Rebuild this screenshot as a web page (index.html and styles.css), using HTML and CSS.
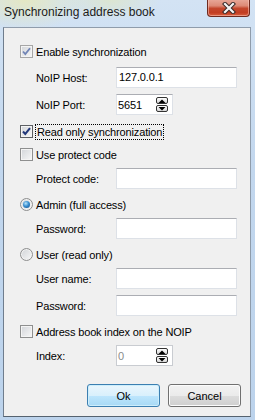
FILE: index.html
```html
<!DOCTYPE html>
<html lang="en">
<head>
    <meta charset="UTF-8">
    <title>Synchronizing address book</title>
    <link rel="stylesheet" href="styles.css">
</head>
<body>
    <div class="titlebar">
        <div class="title">Synchronizing address book</div>
        <div class="close">
            <svg width="14" height="12" viewBox="0 0 14 12">
                <path d="M3 2 L11 10 M11 2 L3 10" stroke="#3a2a28" stroke-width="4.2" stroke-linecap="square"/>
                <path d="M3 2 L11 10 M11 2 L3 10" stroke="#f4f4f4" stroke-width="2.2" stroke-linecap="square"/>
            </svg>
        </div>
    </div>

    <div class="client">
        <div class="row check-row m17">
            <span class="box soft"><svg width="11" height="11" viewBox="0 0 11 11"><path d="M2 5.5 L4.3 8 L9 2.2" class="tick"/></svg></span>
            <span>Enable synchronization</span>
        </div>
        <div class="row field-row m9">
            <span class="label">NoIP Host:</span>
            <div class="text">127.0.0.1</div>
        </div>
        <div class="row field-row m6">
            <span class="label">NoIP Port:</span>
            <div class="spin">
                <span class="value">5651</span>
                <div class="arrows">
                    <span class="arrow"><svg width="8" height="4" viewBox="0 0 8 4"><path d="M0.5 4 L4 0.5 L7.5 4 Z" fill="#000"/></svg></span>
                    <span class="arrow"><svg width="8" height="4" viewBox="0 0 8 4"><path d="M0.5 0 L4 3.5 L7.5 0 Z" fill="#000"/></svg></span>
                </div>
            </div>
        </div>
        <div class="row check-row m10">
            <span class="box dark"><svg width="11" height="11" viewBox="0 0 11 11"><path d="M2 5.5 L4.3 8 L9 2.2" class="tick"/></svg></span>
            <span class="focus">Read only synchronization</span>
        </div>
        <div class="row check-row m10">
            <span class="box"></span>
            <span>Use protect code</span>
        </div>
        <div class="row field-row m7">
            <span class="label">Protect code:</span>
            <div class="text"></div>
        </div>
        <div class="row check-row m9">
            <span class="radio on"><span class="dot"></span></span>
            <span>Admin (full access)</span>
        </div>
        <div class="row field-row m7">
            <span class="label">Password:</span>
            <div class="text"></div>
        </div>
        <div class="row check-row m9">
            <span class="radio"></span>
            <span>User (read only)</span>
        </div>
        <div class="row field-row m7">
            <span class="label">User name:</span>
            <div class="text"></div>
        </div>
        <div class="row field-row m6">
            <span class="label">Password:</span>
            <div class="text"></div>
        </div>
        <div class="row check-row m9">
            <span class="box"></span>
            <span>Address book index on the NOIP</span>
        </div>
        <div class="row field-row m7">
            <span class="label">Index:</span>
            <div class="spin disabled">
                <span class="value">0</span>
                <div class="arrows">
                    <span class="arrow"><svg width="8" height="4" viewBox="0 0 8 4"><path d="M0.5 4 L4 0.5 L7.5 4 Z" fill="#000"/></svg></span>
                    <span class="arrow"><svg width="8" height="4" viewBox="0 0 8 4"><path d="M0.5 0 L4 3.5 L7.5 0 Z" fill="#000"/></svg></span>
                </div>
            </div>
        </div>
        <div class="buttons">
            <button class="btn default">Ok</button>
            <button class="btn">Cancel</button>
        </div>
    </div>
</body>
</html>
```

FILE: styles.css
```css
/* Window frame */
body {
  margin: 0;
  width: 255px;
  height: 420px;
  overflow: hidden;
  display: flex;
  flex-direction: column;
  font-family: "Liberation Sans", Arial, sans-serif;
  font-size: 11px;
  color: #000;
  background:
    radial-gradient(ellipse 60px 30px at 25px 0px, rgba(230, 232, 190, 0.9), rgba(230, 232, 190, 0)),
    radial-gradient(ellipse 50px 20px at 110px 0px, rgba(222, 230, 200, 0.8), rgba(222, 230, 200, 0)),
    linear-gradient(#d3e3f4, #c2d7ee 40%, #bcd3ec);
}

.titlebar {
  height: 27px;
  display: flex;
  flex-shrink: 0;
}

.title {
  flex: 1;
  padding: 5px 0 0 4px;
  font-size: 12px;
  line-height: 15px;
  color: #1b1b1b;
}

/* Red close button */
.close {
  width: 43px;
  height: 18px;
  margin: -1px 5px 0 0;
  box-sizing: border-box;
  border: 1px solid #6e2a1f;
  border-top: 0;
  border-radius: 0 0 4px 4px;
  background: linear-gradient(#e9aa9a 0%, #dd8a76 40%, #c4472c 55%, #c23d22 80%, #d9603e 100%);
  box-shadow: inset 0 0 0 1px rgba(255, 210, 200, 0.5);
  display: flex;
  align-items: center;
  justify-content: center;
}

/* Dialog body */
.client {
  flex: 1;
  margin: 0 4px 3px 3px;
  border: 1px solid #8f9cab;
  border-left-color: #6f7d8d;
  border-bottom-color: #55626f;
  background: #f0f0f0;
  padding-left: 16px;
  letter-spacing: -0.15px;
}

.row {
  display: flex;
  align-items: center;
}

.check-row {
  height: 13px;
}

.field-row {
  height: 21px;
  padding-left: 16px;
}

.m17 { margin-top: 17px; }
.m10 { margin-top: 10px; }
.m9 { margin-top: 9px; }
.m7 { margin-top: 7px; }
.m6 { margin-top: 6px; }

.label {
  width: 80px;
}

/* Check boxes and radios */
.box {
  width: 13px;
  height: 13px;
  box-sizing: border-box;
  margin-right: 3px;
  border: 1px solid #8e8f8f;
  background: linear-gradient(135deg, #d2d5d9, #f7f7f7);
  box-shadow: inset 0 0 0 1px #f4f4f4;
  display: flex;
  align-items: center;
  justify-content: center;
}

.box.soft {
  border-color: #a6a6a6;
}

.box.dark {
  border-color: #5c5f63;
}

.tick {
  fill: none;
  stroke: #4a5f9a;
  stroke-width: 1.8;
}

.soft .tick {
  stroke: #7185b6;
}

.dark .tick {
  stroke: #22387a;
  stroke-width: 2;
}

.focus {
  margin-left: -1px;
  padding: 0 1px;
  border: 1px dotted #000;
  line-height: 14px;
}

.radio {
  width: 13px;
  height: 13px;
  box-sizing: border-box;
  margin-right: 3px;
  border: 1px solid #8e8f8f;
  border-radius: 50%;
  background: linear-gradient(135deg, #d0d3d7, #f8f8f8);
  box-shadow: inset 0 0 0 1px #f2f2f2;
  display: flex;
  align-items: center;
  justify-content: center;
}

.dot {
  width: 7px;
  height: 7px;
  border-radius: 50%;
  background: radial-gradient(circle at 40% 35%, #b8e4fb 0%, #3a8fd0 45%, #114a86 100%);
}

/* Text boxes */
.text {
  width: 121px;
  height: 21px;
  box-sizing: border-box;
  border: 1px solid #dde1e7;
  border-top-color: #abadb3;
  background: #fff;
  padding: 0 2px;
  line-height: 19px;
}

.spin {
  width: 57px;
  height: 21px;
  box-sizing: border-box;
  border: 1px solid #dde1e7;
  border-top-color: #abadb3;
  background: #fff;
  display: flex;
  align-items: center;
}

.value {
  padding-left: 1px;
}

.spin.disabled {
  border-color: #c9ccd1;
}

.spin.disabled .value {
  color: #8a8a8a;
}

.arrows {
  margin-left: auto;
  margin-right: 4px;
  display: flex;
  flex-direction: column;
}

.arrow {
  width: 12px;
  height: 7px;
  box-sizing: border-box;
  border: 1px solid #333;
  border-radius: 2px;
  background: linear-gradient(#ffffff, #d6d6d6);
  display: flex;
  align-items: center;
  justify-content: center;
}

.arrow + .arrow {
  margin-top: 1px;
}

/* Push buttons */
.buttons {
  display: flex;
  justify-content: flex-end;
  gap: 8px;
  margin-top: 18px;
  padding-right: 9px;
}

.btn {
  width: 73px;
  height: 23px;
  box-sizing: border-box;
  border: 1px solid #707070;
  border-radius: 3px;
  background: linear-gradient(#f2f2f2 0%, #ebebeb 50%, #dddddd 50%, #cfcfcf 100%);
  box-shadow: inset 0 0 0 1px #fcfcfc;
  font-family: "Liberation Sans", Arial, sans-serif;
  font-size: 11px;
  color: #000;
  padding: 0;
}

.btn.default {
  border-color: #3c7fb1;
  background: linear-gradient(#eaf6fd 0%, #d9f0fc 50%, #bee6fd 50%, #a7d9f5 100%);
  box-shadow: inset 0 0 0 1px #cdeefc;
}
```
